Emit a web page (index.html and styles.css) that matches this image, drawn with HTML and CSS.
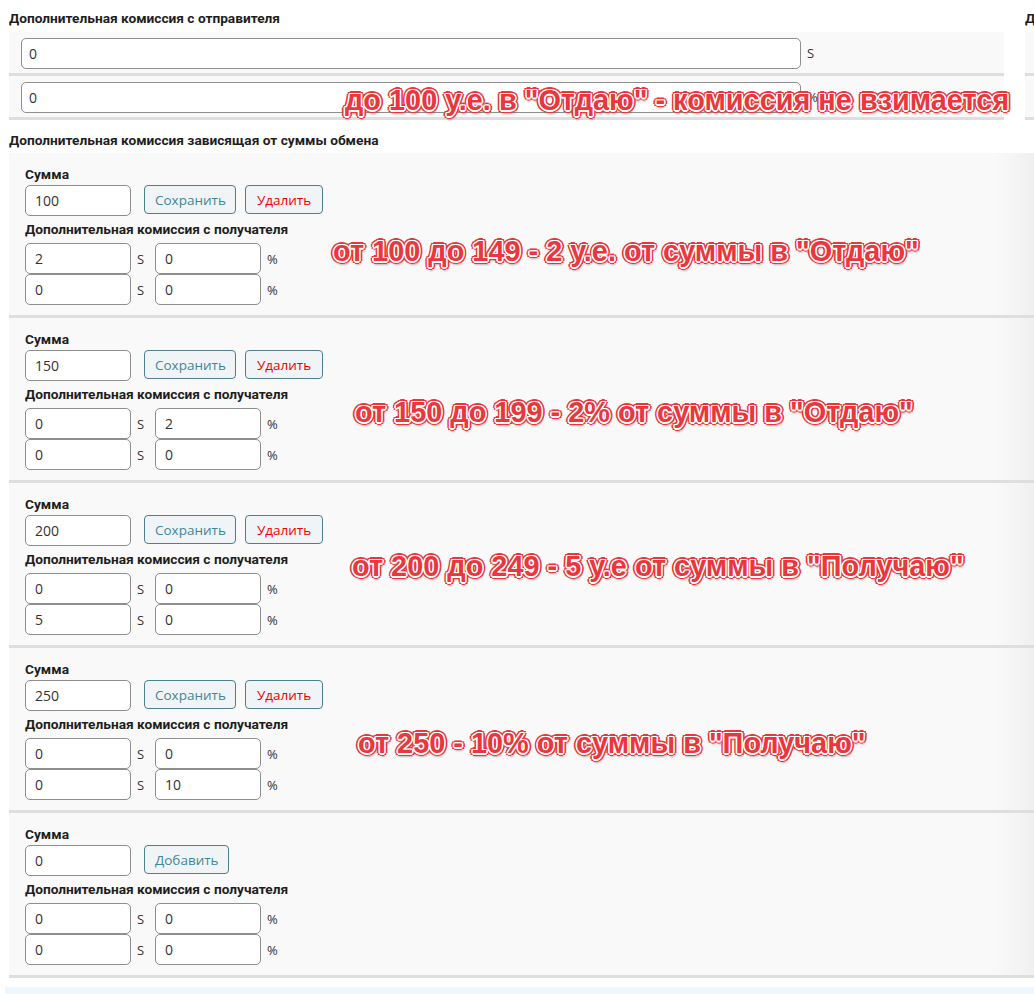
FILE: index.html
```html
<!DOCTYPE html>
<html lang="ru">
<head>
<meta charset="utf-8">
<title>Комиссия</title>
<link rel="stylesheet" href="styles.css">
</head>
<body>
<div class="page">
  <div class="top">
    <div class="col main">
      <div class="heading">Дополнительная комиссия с отправителя</div>
      <div class="plain-rows">
        <div class="plain-row"><input class="field wide" value="0"><span class="unit">S</span></div>
        <div class="plain-row"><input class="field wide" value="0"><span class="unit">%</span></div>
      </div>
    </div>
    <div class="col side">
      <div class="heading">Дополнительная комиссия с получателя</div>
      <div class="plain-rows">
        <div class="plain-row"><input class="field wide" value="0"></div>
        <div class="plain-row"><input class="field wide" value="0"></div>
      </div>
    </div>
  </div>

  <div class="heading h2">Дополнительная комиссия зависящая от суммы обмена</div>

  <div class="blocks">
    <div class="block">
      <div class="label">Сумма</div>
      <div class="sum-row"><input class="field small" value="100"><button class="btn">Сохранить</button><button class="btn del">Удалить</button></div>
      <div class="label l2">Дополнительная комиссия с получателя</div>
      <div class="pair"><input class="field small" value="2"><span class="u">S</span><input class="field small" value="0"><span class="u">%</span></div>
      <div class="pair"><input class="field small" value="0"><span class="u">S</span><input class="field small" value="0"><span class="u">%</span></div>
    </div>
    <div class="block">
      <div class="label">Сумма</div>
      <div class="sum-row"><input class="field small" value="150"><button class="btn">Сохранить</button><button class="btn del">Удалить</button></div>
      <div class="label l2">Дополнительная комиссия с получателя</div>
      <div class="pair"><input class="field small" value="0"><span class="u">S</span><input class="field small" value="2"><span class="u">%</span></div>
      <div class="pair"><input class="field small" value="0"><span class="u">S</span><input class="field small" value="0"><span class="u">%</span></div>
    </div>
    <div class="block">
      <div class="label">Сумма</div>
      <div class="sum-row"><input class="field small" value="200"><button class="btn">Сохранить</button><button class="btn del">Удалить</button></div>
      <div class="label l2">Дополнительная комиссия с получателя</div>
      <div class="pair"><input class="field small" value="0"><span class="u">S</span><input class="field small" value="0"><span class="u">%</span></div>
      <div class="pair"><input class="field small" value="5"><span class="u">S</span><input class="field small" value="0"><span class="u">%</span></div>
    </div>
    <div class="block">
      <div class="label">Сумма</div>
      <div class="sum-row"><input class="field small" value="250"><button class="btn">Сохранить</button><button class="btn del">Удалить</button></div>
      <div class="label l2">Дополнительная комиссия с получателя</div>
      <div class="pair"><input class="field small" value="0"><span class="u">S</span><input class="field small" value="0"><span class="u">%</span></div>
      <div class="pair"><input class="field small" value="0"><span class="u">S</span><input class="field small" value="10"><span class="u">%</span></div>
    </div>
    <div class="block">
      <div class="label">Сумма</div>
      <div class="sum-row"><input class="field small" value="0"><button class="btn add">Добавить</button></div>
      <div class="label l2">Дополнительная комиссия с получателя</div>
      <div class="pair"><input class="field small" value="0"><span class="u">S</span><input class="field small" value="0"><span class="u">%</span></div>
      <div class="pair"><input class="field small" value="0"><span class="u">S</span><input class="field small" value="0"><span class="u">%</span></div>
    </div>
  </div>
  <div class="info-strip"></div>

  <div class="note n1">до 100 у.е. в "Отдаю" - комиссия не взимается</div>
  <div class="note n2">от 100 до 149 - 2 у.е. от суммы в "Отдаю"</div>
  <div class="note n3">от 150 до 199 - 2% от суммы в "Отдаю"</div>
  <div class="note n4">от 200 до 249 - 5 у.е от суммы в "Получаю"</div>
  <div class="note n5">от 250 - 10% от суммы в "Получаю"</div>
</div>
</body>
</html>
```

FILE: styles.css
```css
html, body {
  margin: 0;
  padding: 0;
  background: #fff;
  overflow: hidden;
}
body {
  font-family: Roboto, "Open Sans", "Liberation Sans", sans-serif;
  color: #222;
}
.page {
  position: relative;
  width: 1034px;
  height: 994px;
  padding-left: 9px;
  box-sizing: border-box;
  overflow: hidden;
}
.top {
  display: flex;
  gap: 21px;
  width: 1400px;
}
.col.main { width: 995px; }
.col.side { width: 380px; }
.heading {
  font-size: 13.7px;
  font-weight: 700;
  line-height: 16px;
  padding-top: 10px;
  padding-bottom: 6px;
  white-space: nowrap;
  color: #1e1e1e;
}
.h2 {
  padding-top: 12px;
  padding-bottom: 5px;
}
.plain-rows {
  background: #f9f9f9;
}
.plain-row {
  display: flex;
  align-items: center;
  height: 41px;
  padding: 0 12px;
  border-bottom: 3px solid #dedede;
  box-sizing: content-box;
}
.field {
  font-family: "Open Sans", "Liberation Sans", sans-serif;
  font-size: 14px;
  color: #333;
  height: 31px;
  border: 1px solid #8e8e8e;
  border-radius: 5px;
  background: #fff;
  padding: 0 9px;
  box-sizing: border-box;
  outline: none;
}
.field.wide {
  width: 780px;
  margin-top: 1px;
  padding-left: 7px;
}
.side .field.wide { width: 360px; }
.unit {
  font-family: "Open Sans", "Liberation Sans", sans-serif;
  font-size: 13px;
  margin-left: 6px;
  color: #333;
}
.blocks {
  width: 1025px;
}
.block {
  background: linear-gradient(to right, #f9f9f9 0, #f9f9f9 985px, #f0f0f0 1025px);
  border-bottom: 3px solid #dedede;
  padding: 13px 16px 10px;
  height: 139px;
  box-sizing: content-box;
}
.label {
  font-size: 13.7px;
  font-weight: 700;
  line-height: 16px;
  color: #1e1e1e;
  white-space: nowrap;
}
.l2 { margin-top: 5px; margin-bottom: 6px; }
.sum-row {
  display: flex;
  align-items: center;
  margin-top: 3px;
  height: 31px;
}
.field.small { width: 106px; }
.btn {
  font-family: "Open Sans", "Liberation Sans", sans-serif;
  font-size: 13.5px;
  height: 29px;
  padding: 0 9px 0 10px;
  background: #f1f4f6;
  border: 1px solid #4e7f8b;
  border-radius: 4px;
  color: #3f8796;
  margin-left: 13px;
  margin-bottom: 2px;
}
.btn + .btn { margin-left: 9px; }
.btn.del { color: #f00000; padding: 0 11px; }
.pair {
  display: flex;
  align-items: center;
  height: 31px;
}
.u {
  font-family: "Open Sans", "Liberation Sans", sans-serif;
  font-size: 13px;
  color: #333;
  width: 24px;
  text-align: left;
  padding-left: 6px;
  box-sizing: border-box;
}
.info-strip {
  margin-top: 9px;
  margin-left: -4px;
  height: 10px;
  background: #eef7fd;
}
.note {
  position: absolute;
  font-family: "Liberation Sans", Arial, sans-serif;
  font-weight: 700;
  font-size: 28.9px;
  line-height: 32px;
  white-space: nowrap;
  color: #e8383d;
  text-shadow:
    1.5px 0 0 #fff, -1.5px 0 0 #fff, 0 1.5px 0 #fff, 0 -1.5px 0 #fff,
    1px 1px 0 #fff, -1px 1px 0 #fff, 1px -1px 0 #fff, -1px -1px 0 #fff,
    3.2px 0 0 #e8383d, -3.2px 0 0 #e8383d, 0 3.2px 0 #e8383d, 0 -3.2px 0 #e8383d,
    2.3px 2.3px 0 #e8383d, -2.3px 2.3px 0 #e8383d, 2.3px -2.3px 0 #e8383d, -2.3px -2.3px 0 #e8383d,
    1px 4px 2px rgba(120, 40, 40, 0.35);
}
.n1 { left: 345px; top: 84px; }
.n2 { left: 333px; top: 235px; }
.n3 { left: 355px; top: 396px; }
.n4 { left: 352px; top: 550px; }
.n5 { left: 358px; top: 727px; }
```
